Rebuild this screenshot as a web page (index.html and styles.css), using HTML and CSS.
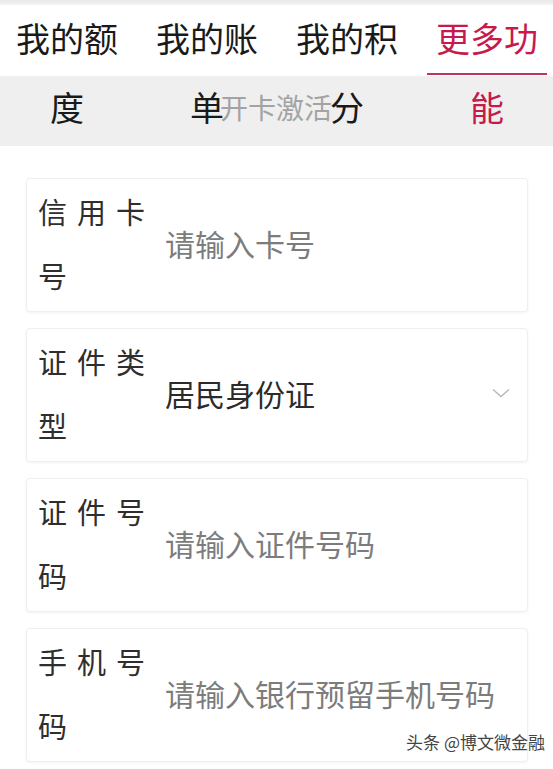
FILE: index.html
```html
<!DOCTYPE html>
<html lang="zh-CN">
<head>
  <meta charset="UTF-8" />
  <meta name="viewport" content="width=device-width, initial-scale=1.0"/>
  <title>开卡激活</title>
  <link rel="stylesheet" href="styles.css">
</head>
<body>
  <div class="status-strip"></div>
  <div class="tab-bar">
    <div class="tabs">
      <div class="tab">我的额度</div>
      <div class="tab">我的账单</div>
      <div class="tab">我的积分</div>
      <div class="tab active">更多功能</div>
    </div>
    <div class="page-title">开卡激活</div>
  </div>

  <div class="form">
    <div class="field">
      <div class="label">信用卡号</div>
      <div class="value placeholder">请输入卡号</div>
    </div>
    <div class="field">
      <div class="label">证件类型</div>
      <div class="value">居民身份证</div>
      <svg class="chevron" width="18" height="10" viewBox="0 0 18 10">
        <path d="M1 1.5 L9 8.5 L17 1.5" fill="none" stroke="#b8b8b8" stroke-width="1.4"/>
      </svg>
    </div>
    <div class="field">
      <div class="label">证件号码</div>
      <div class="value placeholder">请输入证件号码</div>
    </div>
    <div class="field">
      <div class="label">手机号码</div>
      <div class="value placeholder">请输入银行预留手机号码</div>
    </div>
  </div>

  <div class="watermark">头条 @博文微金融</div>
</body>
</html>
```

FILE: styles.css
```css
body {
  font-family: "Noto Sans CJK SC", "Noto Sans", sans-serif;
  background-color: #fff;
  color: #333;
  margin: 0;
  overflow: hidden;
}
.status-strip {
  height: 5px;
  background: linear-gradient(#e8e8e8, #f5f5f5);
}
.tab-bar {
  position: relative;
  display: flow-root;
  height: 141px;
  background: linear-gradient(#fff 71px, #efefef 71px);
}
.tabs {
  display: grid;
  grid-template-columns: repeat(4, 140px);
  margin: -2px 0 0 -3px;
}
.tab {
  position: relative;
  padding: 0 10px;
  font-size: 34px;
  line-height: 69px;
  text-align: center;
  color: #1a1a1a;
}
.tab.active {
  color: #c71a4c;
}
.tab.active::after {
  content: "";
  position: absolute;
  left: 10px;
  right: 10px;
  top: 70px;
  height: 2px;
  background-color: #c0335c;
}
.page-title {
  position: absolute;
  left: 220px;
  top: 88px;
  font-size: 28px;
  line-height: 1;
  color: #a3a3a3;
}
.form {
  padding: 32px 25px 0 26px;
}
.field {
  display: flex;
  align-items: center;
  padding: 0 11px 4px;
  margin-bottom: 16px;
  border: 1px solid #efefef;
  border-radius: 4px;
  box-shadow: 0 1px 3px rgba(0, 0, 0, 0.05);
  background-color: #fff;
}
.label {
  flex: 0 0 127px;
  width: 127px;
  font-size: 29px;
  line-height: 64px;
  letter-spacing: 10px;
  color: #2e2e2e;
}
.value {
  flex: 1;
  font-size: 30px;
  color: #2b2b2b;
}
.value.placeholder {
  color: #7c7c7c;
}
.chevron {
  margin-right: 6px;
}
.watermark {
  position: absolute;
  right: 8px;
  bottom: 15px;
  font-size: 17px;
  color: #444;
  text-shadow: 0 0 2px #fff;
}
```
